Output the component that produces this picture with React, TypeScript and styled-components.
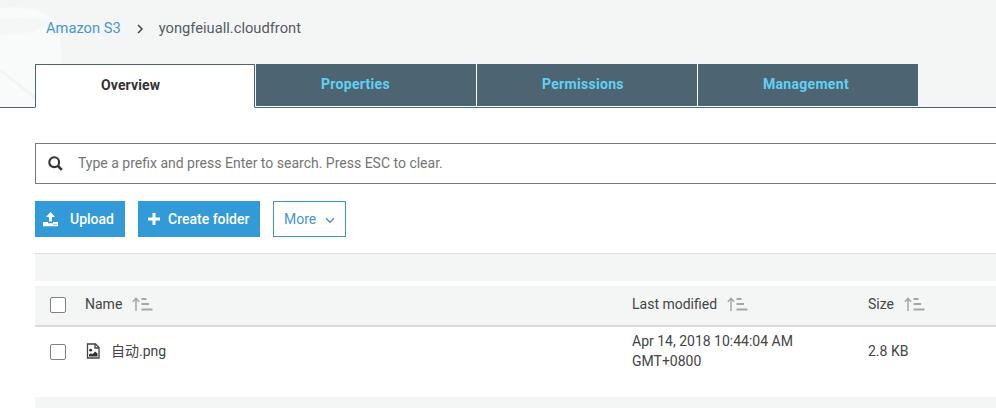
import React from 'react';
import styled, { createGlobalStyle, css } from 'styled-components';

const Global = createGlobalStyle`
  * { box-sizing: border-box; }
  html, body { margin: 0; padding: 0; overflow: hidden; }
  body {
    background: #fff;
    color: #444;
    font-family: Roboto, "Noto Sans CJK SC", sans-serif;
    font-size: 14px;
    line-height: 20px;
  }
`;

const Page = styled.div`
  width: 996px;
  height: 408px;
  overflow: hidden;
`;

const Header = styled.header`
  position: relative;
  height: 108px;
  background: #f4f6f6;
  border-bottom: 1px solid #4d6572;
`;

const Watermark = styled.svg`
  position: absolute;
  left: 0;
  top: 0;
`;

const Breadcrumb = styled.nav`
  position: relative;
  display: flex;
  align-items: center;
  height: 64px;
  padding: 0 0 8px 46px;
  color: #545b64;
  font-size: 14.7px;
`;

const CrumbLink = styled.a`
  color: #4a95ce;
`;

const CrumbArrow = styled.svg`
  margin: 1px 15px 0 16px;
`;

const Tabs = styled.div`
  position: relative;
  display: flex;
  height: 44px;
  margin-left: 35px;
`;

const Tab = styled.button<{ $active?: boolean }>`
  width: 221px;
  height: 43px;
  padding: 0 0 2px 65px;
  border: 0;
  border-right: 1px solid #fff;
  border-bottom: 1px solid #fff;
  background: #4d6572;
  color: #62d0f3;
  font: bold 14px/20px Roboto, sans-serif;
  letter-spacing: 0.3px;
  text-align: left;
  &:last-child {
    width: 220px;
    border-right: 0;
  }
  ${(p) =>
    p.$active &&
    css`
      width: 220px;
      height: 44px;
      margin-right: 1px;
      padding-bottom: 2px;
      border: 1px solid #4d6572;
      border-bottom-color: #fff;
      background: #fff;
      color: #333;
      letter-spacing: 0.12px;
    `}
`;

const SearchBar = styled.label`
  display: flex;
  align-items: center;
  height: 41px;
  margin: 35px -2px 0 35px;
  padding-left: 12px;
  border: 1px solid #777b7e;
`;

const SearchInput = styled.input`
  width: 500px;
  margin-left: 15px;
  padding: 0 0 1px;
  border: 0;
  outline: 0;
  font: 14px/20px Roboto, sans-serif;
  &::placeholder { color: #757575; opacity: 1; }
`;

const Actions = styled.div`
  display: flex;
  gap: 13px;
  margin: 17px 0 16px 35px;
`;

const Button = styled.button<{ $width: number; $outline?: boolean }>`
  display: flex;
  align-items: center;
  width: ${(p) => p.$width}px;
  height: 36px;
  padding: 0 0 0 ${(p) => (p.$outline ? 10 : 9)}px;
  border: ${(p) => (p.$outline ? '1px solid #3f97bb' : '0')};
  background: ${(p) => (p.$outline ? '#fff' : '#329ad6')};
  color: ${(p) => (p.$outline ? '#4a95ce' : '#fff')};
  font: ${(p) => (p.$outline ? 400 : 500)} 14px/20px Roboto, sans-serif;
  white-space: nowrap;
`;

const ButtonText = styled.span<{ $gap?: number }>`
  margin-left: ${(p) => p.$gap ?? 0}px;
`;

const UploadSvg = styled.svg`
  margin: 1px 1px 0 -1px;
`;

const Chevron = styled.svg`
  margin: 2px 0 0 9px;
`;

const StatusBar = styled.div`
  height: 28px;
  margin-left: 35px;
  border-top: 1px solid #e0e2e2;
  background: #f4f6f6;
`;

const Row = styled.div<{ $head?: boolean }>`
  display: grid;
  grid-template-columns: 50px 547px 236px 1fr;
  align-items: center;
  height: ${(p) => (p.$head ? 41 : 70)}px;
  margin: ${(p) => (p.$head ? '5px' : '0')} 0 0 35px;
  padding: ${(p) => (p.$head ? '0 0 3px' : '0 0 22px')};
  border-bottom: ${(p) => (p.$head ? '2px solid #dadcdc' : '0')};
  background: ${(p) => (p.$head ? '#f4f6f6' : '#fff')};
`;

const Check = styled.input.attrs({ type: 'checkbox' })`
  appearance: none;
  width: 16px;
  height: 16px;
  margin: 1px 0 0 15px;
  border: 1px solid #808080;
  border-radius: 2px;
  background: #fff;
`;

const Cell = styled.div`
  display: flex;
  align-items: center;
`;

const FileName = styled.span`
  margin-left: 10px;
`;

const SortSvg = styled.svg`
  margin: 0 0 1px 10px;
`;

const Footer = styled.div`
  height: 12px;
  margin-left: 35px;
  background: #f4f6f6;
`;

const SortIcon = () => (
  <SortSvg width="22" height="14" viewBox="0 0 22 14" fill="none" stroke="#a4a7a8">
    <path d="M4 14V1.4M.8 4.7 4 1.4 7.2 4.7" strokeWidth="1.5" />
    <path d="M9.5 2h5M9.5 7h7.5M9.5 12.5h11" strokeWidth="2" />
  </SortSvg>
);

export default function App() {
  return (
    <>
      <Global />
      <Page>
        <Header>
          <Watermark width="70" height="107" viewBox="0 0 70 107">
            <path d="M0 8C28 5 51 12 57 25Q61 35 61 60V107H0Z" fill="#f9fafa" />
            <path d="M0 19C24 17 43 18 51 24C35 33 15 36 0 35Z" fill="#f5f7f7" />
            <path d="M0 70 47 107" stroke="#f3f5f5" strokeWidth="3" />
          </Watermark>
          <Breadcrumb>
            <CrumbLink>Amazon S3</CrumbLink>
            <CrumbArrow width="7" height="10" viewBox="0 0 7 10" fill="none" stroke="#444" strokeWidth="1.5">
              <path d="M1 1 5 5 1 9" />
            </CrumbArrow>
            <span>yongfeiuall.cloudfront</span>
          </Breadcrumb>
          <Tabs>
            <Tab $active>Overview</Tab>
            <Tab>Properties</Tab>
            <Tab>Permissions</Tab>
            <Tab>Management</Tab>
          </Tabs>
        </Header>

        <SearchBar>
          <svg width="15" height="15" viewBox="0 0 15 15" fill="none" stroke="#333">
            <circle cx="6.2" cy="6.2" r="4.9" strokeWidth="2.1" />
            <path d="m9.8 9.8 4 4" strokeWidth="2.6" />
          </svg>
          <SearchInput placeholder="Type a prefix and press Enter to search. Press ESC to clear." />
        </SearchBar>

        <Actions>
          <Button $width={90}>
            <UploadSvg width="15" height="15" viewBox="0 0 15 15" fill="#fff">
              <path d="M7.5 0 12 5H9v4.6H6V5H3Z" />
              <path d="M0 10h5v1.2h5V10h5v4.2H0Z" />
              <path d="M10.5 12.5h1M12.5 12.5h1" stroke="#329ad6" />
            </UploadSvg>
            <ButtonText $gap={11}>Upload</ButtonText>
          </Button>
          <Button $width={122}>
            <svg width="14" height="14" viewBox="0 0 14 14" stroke="#fff" strokeWidth="3">
              <path d="M7 1v12M1 7h12" />
            </svg>
            <ButtonText $gap={7}>Create folder</ButtonText>
          </Button>
          <Button $width={73} $outline>
            <ButtonText>More</ButtonText>
            <Chevron width="10" height="7" viewBox="0 0 10 7" fill="none" stroke="#4a95ce" strokeWidth="1.4">
              <path d="M1 1.2 5 5.2 9 1.2" />
            </Chevron>
          </Button>
        </Actions>

        <StatusBar />
        <Row $head>
          <Check aria-label="Select all" />
          <Cell>Name<SortIcon /></Cell>
          <Cell>Last modified<SortIcon /></Cell>
          <Cell>Size<SortIcon /></Cell>
        </Row>
        <Row>
          <Check aria-label="Select file" />
          <Cell>
            <svg width="16" height="16" viewBox="0 0 16 16">
              <path d="M2.5 1h8l3.5 3.5V15H2.5Z M10 1v4h4" fill="none" stroke="#444" strokeWidth="1.3" />
              <circle cx="5.7" cy="7.2" r="1.4" fill="#333" />
              <path d="M4 13.5v-2l2-1.2 1.5 1L10.2 8.5l2.3 2v3Z" fill="#333" />
            </svg>
            <FileName>自动.png</FileName>
          </Cell>
          <Cell>Apr 14, 2018 10:44:04 AM<br />GMT+0800</Cell>
          <Cell>2.8 KB</Cell>
        </Row>
        <Footer />
      </Page>
    </>
  );
}
